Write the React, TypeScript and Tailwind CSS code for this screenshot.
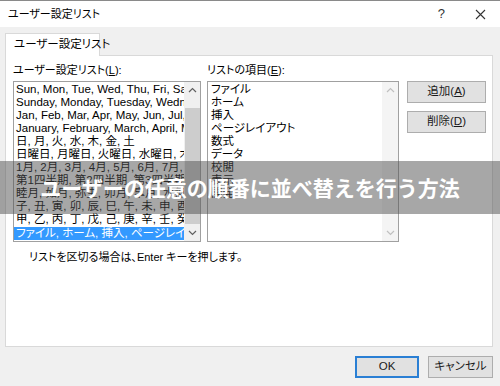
import React from "react";

const leftItems = [
  "Sun, Mon, Tue, Wed, Thu, Fri, Sat",
  "Sunday, Monday, Tuesday, Wednesday, Thursday",
  "Jan, Feb, Mar, Apr, May, Jun, Jul, Aug, Sep",
  "January, February, March, April, May, June",
  "日, 月, 火, 水, 木, 金, 土",
  "日曜日, 月曜日, 火曜日, 水曜日, 木曜日, 金曜日",
  "1月, 2月, 3月, 4月, 5月, 6月, 7月, 8月, 9月",
  "第1四半期, 第2四半期, 第3四半期, 第4四半期",
  "睦月, 如月, 弥生, 卯月, 皐月, 水無月, 文月",
  "子, 丑, 寅, 卯, 辰, 巳, 午, 未, 申, 酉, 戌, 亥",
  "甲, 乙, 丙, 丁, 戊, 己, 庚, 辛, 壬, 癸",
];

const rightItems = ["ファイル", "ホーム", "挿入", "ページレイアウト", "数式", "データ", "校閲", "表示", "開発"];

function Chevron({ up, color = "#606060" }: { up?: boolean; color?: string }) {
  return (
    <svg width="9" height="6" viewBox="0 0 9 6" fill="none">
      <path d={up ? "M1 5L4.5 1.5L8 5" : "M1 1L4.5 4.5L8 1"} stroke={color} strokeWidth="1.2" />
    </svg>
  );
}

function Btn({ children, primary }: { children: React.ReactNode; primary?: boolean }) {
  return (
    <div
      className={
        "flex h-full items-center justify-center bg-[#e1e1e1] text-[11.5px] text-[#1a1a1a] " +
        (primary ? "border-2 border-[#2a7fd4]" : "border border-[#adadad]")
      }
    >
      {children}
    </div>
  );
}

export default function App() {
  return (
    <div className="relative h-[386px] w-[500px] overflow-hidden bg-[#f0f0f0] font-['Liberation_Sans','Noto_Sans_CJK_JP',sans-serif] text-black [font-feature-settings:'palt']">
      {/* title bar */}
      <div className="flex h-[27px] items-center justify-between border-t border-[#8a8a8a] bg-white pl-[8px] pr-[14px] text-[11px]">
        <span>ユーザー設定リスト</span>
        <div className="flex items-center gap-[30px] text-[#333]">
          <span className="text-[13px]">?</span>
          <svg width="11" height="11" viewBox="0 0 11 11">
            <path d="M1 1L10 10M10 1L1 10" stroke="#333" strokeWidth="1.1" />
          </svg>
        </div>
      </div>

      {/* tab */}
      <div className="pl-[5px] pt-[6px]">
        <div className="relative z-10 -mb-px flex h-[23px] w-[95px] items-center whitespace-nowrap border border-b-0 border-[#d9d9d9] bg-white pl-[8px] text-[11.5px]">
          ユーザー設定リスト
        </div>
      </div>

      {/* panel */}
      <div className="mx-[5px] h-[292px] w-[488px] border border-[#d9d9d9] bg-white pl-[7px] pt-[8px] text-[11px]">
        <div className="flex">
          {/* left */}
          <div className="w-[188px]">
            <div className="h-[17px] leading-[13px]">
              ユーザー設定リスト(<span className="underline">L</span>):
            </div>
            <div className="flex h-[161px] border border-[#a0a0a0]">
              <div className="flex-1 overflow-hidden pt-[1px] text-[11.5px]">
                {leftItems.map((t) => (
                  <div key={t} className="h-[13px] whitespace-nowrap pl-[2px] leading-[13px]">
                    {t}
                  </div>
                ))}
                <div className="mt-[1px] h-[13px] whitespace-nowrap bg-[#3399ff] pl-[2px] leading-[13px] text-white">
                  ファイル, ホーム, 挿入, ページレイアウト, 数式
                </div>
              </div>
              <div className="flex w-[16px] flex-col items-center bg-[#f0f0f0]">
                <div className="flex h-[16px] items-center">
                  <Chevron up />
                </div>
                <div className="mt-[10px] h-[116px] w-[15px] bg-[#cdcdcd]" />
                <div className="mt-auto flex h-[16px] items-center">
                  <Chevron />
                </div>
              </div>
            </div>
          </div>

          {/* right list */}
          <div className="ml-[6px] w-[192px]">
            <div className="h-[17px] leading-[13px]">
              リストの項目(<span className="underline">E</span>):
            </div>
            <div className="flex h-[161px] border border-[#a0a0a0]">
              <div className="flex-1 overflow-hidden pl-[3px] pt-[1px] text-[11.5px]">
                {rightItems.map((t) => (
                  <div key={t} className="h-[13px] leading-[13px]">
                    {t}
                  </div>
                ))}
              </div>
              <div className="flex w-[16px] flex-col items-center bg-[#f4f4f4]">
                <div className="flex h-[16px] items-center">
                  <Chevron up color="#c0c0c0" />
                </div>
                <div className="mt-auto flex h-[16px] items-center">
                  <Chevron color="#c0c0c0" />
                </div>
              </div>
            </div>
          </div>

          {/* buttons */}
          <div className="ml-[8px] flex w-[79px] flex-col gap-[8px] pt-[17px]">
            <div className="h-[22px]">
              <Btn>
                <span>
                  追加(<span className="underline">A</span>)
                </span>
              </Btn>
            </div>
            <div className="h-[22px]">
              <Btn>
                <span>
                  削除(<span className="underline">D</span>)
                </span>
              </Btn>
            </div>
          </div>
        </div>

        <div className="mt-[7px] pl-[16px] text-[11px]">リストを区切る場合は、Enter キーを押します。</div>
      </div>

      {/* footer buttons */}
      <div className="flex justify-end gap-[9px] pr-[7px] pt-[9px]">
        <div className="h-[22px] w-[64px]">
          <Btn primary>OK</Btn>
        </div>
        <div className="h-[22px] w-[65px]">
          <Btn>キャンセル</Btn>
        </div>
      </div>

      {/* overlay banner */}
      <div className="absolute left-0 top-[161px] flex h-[53px] w-[500px] items-center justify-center bg-[rgba(80,80,80,0.5)]">
        <span className="font-['Noto_Sans_CJK_JP',sans-serif] text-[21px] font-bold text-white [font-feature-settings:normal]">
          ユーザーの任意の順番に並べ替えを行う方法
        </span>
      </div>
    </div>
  );
}
